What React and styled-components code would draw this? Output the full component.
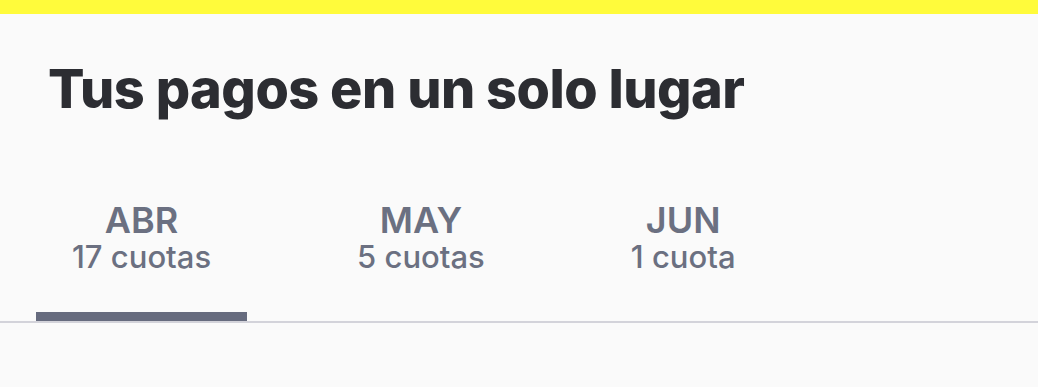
import React from "react";
import styled, { createGlobalStyle } from "styled-components";

const GlobalStyle = createGlobalStyle`
  html, body {
    margin: 0;
    padding: 0;
    background: #fafafa;
  }
  body {
    font-family: "Inter", "Noto Sans", sans-serif;
  }
`;

const Page = styled.div`
  width: 1038px;
  height: 387px;
  background: #fafafa;
  overflow: hidden;
`;

const TopBar = styled.div`
  height: 14px;
  background: #fffb3b;
`;

const Title = styled.h1`
  margin: 0;
  padding: 42px 0 0 48px;
  font-family: "Inter", sans-serif;
  font-weight: 800;
  font-size: 54px;
  line-height: 66px;
  letter-spacing: -0.5px;
  color: #2c2d32;
`;

const Tabs = styled.div`
  display: flex;
  gap: 74px;
  margin-top: 79px;
  padding-left: 36px;
  border-bottom: 2px solid #d3d3da;
`;

const Tab = styled.div`
  display: flex;
  flex-direction: column;
  align-items: center;
  padding: 0 36px 37px;
  border-bottom: 9px solid ${(p) => (p.$active ? "#666b7e" : "transparent")};
  color: #6b7081;
`;

const Month = styled.span`
  font-size: 36px;
  font-weight: 600;
  line-height: 38px;
`;

const Count = styled.span`
  font-size: 31px;
  font-weight: 500;
  line-height: 36px;
`;

const tabs = [
  { month: "ABR", count: "17 cuotas" },
  { month: "MAY", count: "5 cuotas" },
  { month: "JUN", count: "1 cuota" },
];

export default function App() {
  return (
    <Page>
      <GlobalStyle />
      <TopBar />
      <Title>Tus pagos en un solo lugar</Title>
      <Tabs>
        {tabs.map((t, i) => (
          <Tab key={t.month} $active={i === 0}>
            <Month>{t.month}</Month>
            <Count>{t.count}</Count>
          </Tab>
        ))}
      </Tabs>
    </Page>
  );
}
